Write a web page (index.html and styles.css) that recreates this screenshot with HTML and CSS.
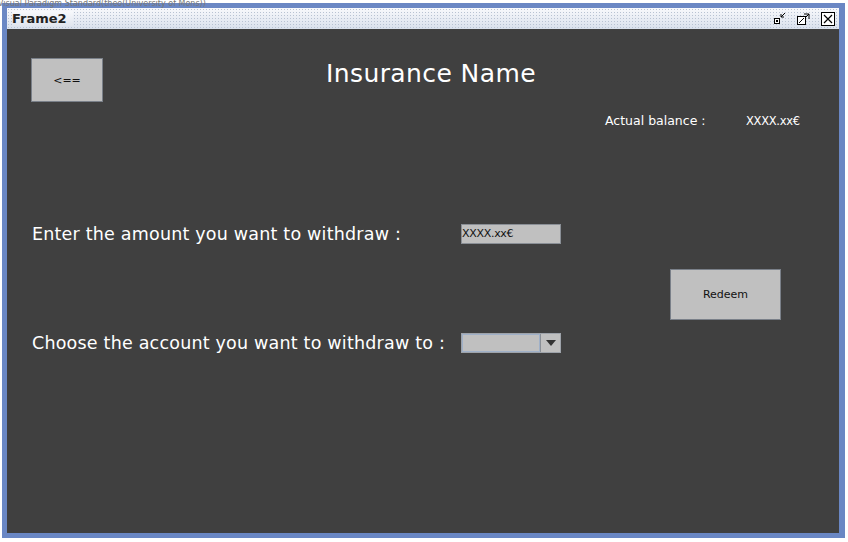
FILE: index.html
```html
<!DOCTYPE html>
<html>
<head>
<meta charset="utf-8">
<link rel="stylesheet" href="styles.css">
</head>
<body>
<div class="watermark">Visual Paradigm Standard(theo(University of Mons))</div>
<div class="frame">
  <div class="titlebar">
    <span class="title">Frame2</span>
    <div class="controls">
      <svg width="14" height="14" viewBox="0 0 14 14"><rect x="1.5" y="6.5" width="5" height="5" fill="#fff" stroke="#000"/><rect x="3" y="8" width="2" height="2" fill="#000"/><path d="M12 1 L8 5 M8 2 V5 H11" stroke="#000" fill="none"/></svg>
      <svg width="14" height="14" viewBox="0 0 14 14"><rect x="1.5" y="4.5" width="8" height="8" fill="#fff" stroke="#000"/><path d="M3 11 L8 6" stroke="#000"/><path d="M8 2 L13 2 L13 7" stroke="#000" fill="none"/><path d="M13 2 L10 5" stroke="#000"/></svg>
      <svg width="14" height="14" viewBox="0 0 14 14"><rect x="0.5" y="0.5" width="13" height="13" fill="#fff" stroke="#000"/><path d="M3 3 L11 11 M11 3 L3 11" stroke="#000" stroke-width="1.2"/></svg>
    </div>
  </div>
  <div class="content">
    <div class="header">
      <button class="btn back">&lt;==</button>
      <h1 class="heading">Insurance Name</h1>
    </div>
    <div class="balance">
      <span class="bal-label">Actual balance :</span>
      <span class="bal-value">XXXX.xx€</span>
    </div>
    <div class="row row1">
      <span class="label">Enter the amount you want to withdraw :</span>
      <div class="field">XXXX.xx€</div>
    </div>
    <div class="redeem-row">
      <button class="btn redeem">Redeem</button>
    </div>
    <div class="row row2">
      <span class="label">Choose the account you want to withdraw to :</span>
      <div class="combo"><div class="combo-box"></div><div class="combo-arrow"><svg width="10" height="6" viewBox="0 0 10 6"><path d="M0 0 H10 L5 6 Z" fill="#333"/></svg></div></div>
    </div>
  </div>
</div>
</body>
</html>
```

FILE: styles.css
```css
html, body {
  margin: 0;
  padding: 0;
  background: #fff;
  font-family: "DejaVu Sans", sans-serif;
}
body {
  width: 848px;
  height: 542px;
  position: relative;
  overflow: hidden;
}
.watermark {
  position: absolute;
  left: -2px;
  top: 0;
  font-size: 8px;
  line-height: 8px;
  color: #777;
  z-index: 2;
  white-space: nowrap;
}
.frame {
  margin: 3px 0 0 2px;
  width: 843px;
  height: 535px;
  box-sizing: border-box;
  background: #6a87c4;
  padding: 5px 6px 5px 5px;
  display: flex;
  flex-direction: column;
}
.titlebar {
  height: 21px;
  flex: none;
  display: flex;
  align-items: center;
  justify-content: space-between;
  background-color: #e6ebf3;
  background-image: radial-gradient(#b8c2d2 0.6px, transparent 0.7px), linear-gradient(#f8f9fc, #d9e0ec);
  background-size: 3px 3px, 100% 100%;
  padding: 0 4px 0 5px;
}
.title {
  font-size: 13px;
  font-weight: bold;
  color: #222;
  background: linear-gradient(#f8f9fc, #e0e5ee);
  padding-right: 6px;
}
.controls {
  display: flex;
  gap: 9px;
  align-items: center;
}
.controls svg { display: block; }
.controls svg:last-child { margin-left: 2px; }
.content {
  flex: 1;
  background: #404040;
  padding: 29px 0 0 24px;
  color: #fff;
}
.header {
  display: flex;
  align-items: flex-start;
}
.btn {
  font-family: "DejaVu Sans", sans-serif;
  background: #c0c0c0;
  border: 1px solid #7a8089;
  color: #111;
  padding: 0;
  margin: 0;
  font-size: 11px;
}
.back {
  width: 72px;
  height: 44px;
}
.heading {
  margin: 1px 0 0 223px;
  font-size: 25px;
  font-weight: normal;
  line-height: 30px;
  letter-spacing: 0.4px;
}
.balance {
  margin: 10px 0 0 574px;
  display: flex;
  align-items: baseline;
  font-size: 12.5px;
  line-height: 18px;
}
.bal-label { width: 141px; }
.bal-value { font-size: 11.5px; letter-spacing: -0.3px; }
.row {
  display: flex;
  align-items: center;
  height: 20px;
}
.row1 { margin-top: 94px; }
.label {
  width: 429px;
  padding-left: 1px;
  font-size: 17.5px;
  letter-spacing: 0.2px;
  white-space: nowrap;
}
.field {
  width: 100px;
  height: 20px;
  box-sizing: border-box;
  background: #c0c0c0;
  border: 1px solid #8a8f96;
  color: #111;
  font-size: 11px;
  line-height: 18px;
  letter-spacing: -0.3px;
}
.redeem-row {
  margin: 25px 0 0 639px;
  display: flex;
}
.redeem {
  width: 111px;
  height: 51px;
}
.row2 { margin-top: 13px; }
.combo {
  width: 100px;
  height: 20px;
  box-sizing: border-box;
  display: flex;
  border: 1px solid #9ea3aa;
  background: #c0c0c0;
}
.combo-box {
  flex: 1;
  border: 1px solid #9fb0c8;
}
.combo-arrow {
  width: 19px;
  border-left: 1px solid #8a8f96;
  display: flex;
  align-items: center;
  justify-content: center;
}
.combo-arrow svg { display: block; }
```
